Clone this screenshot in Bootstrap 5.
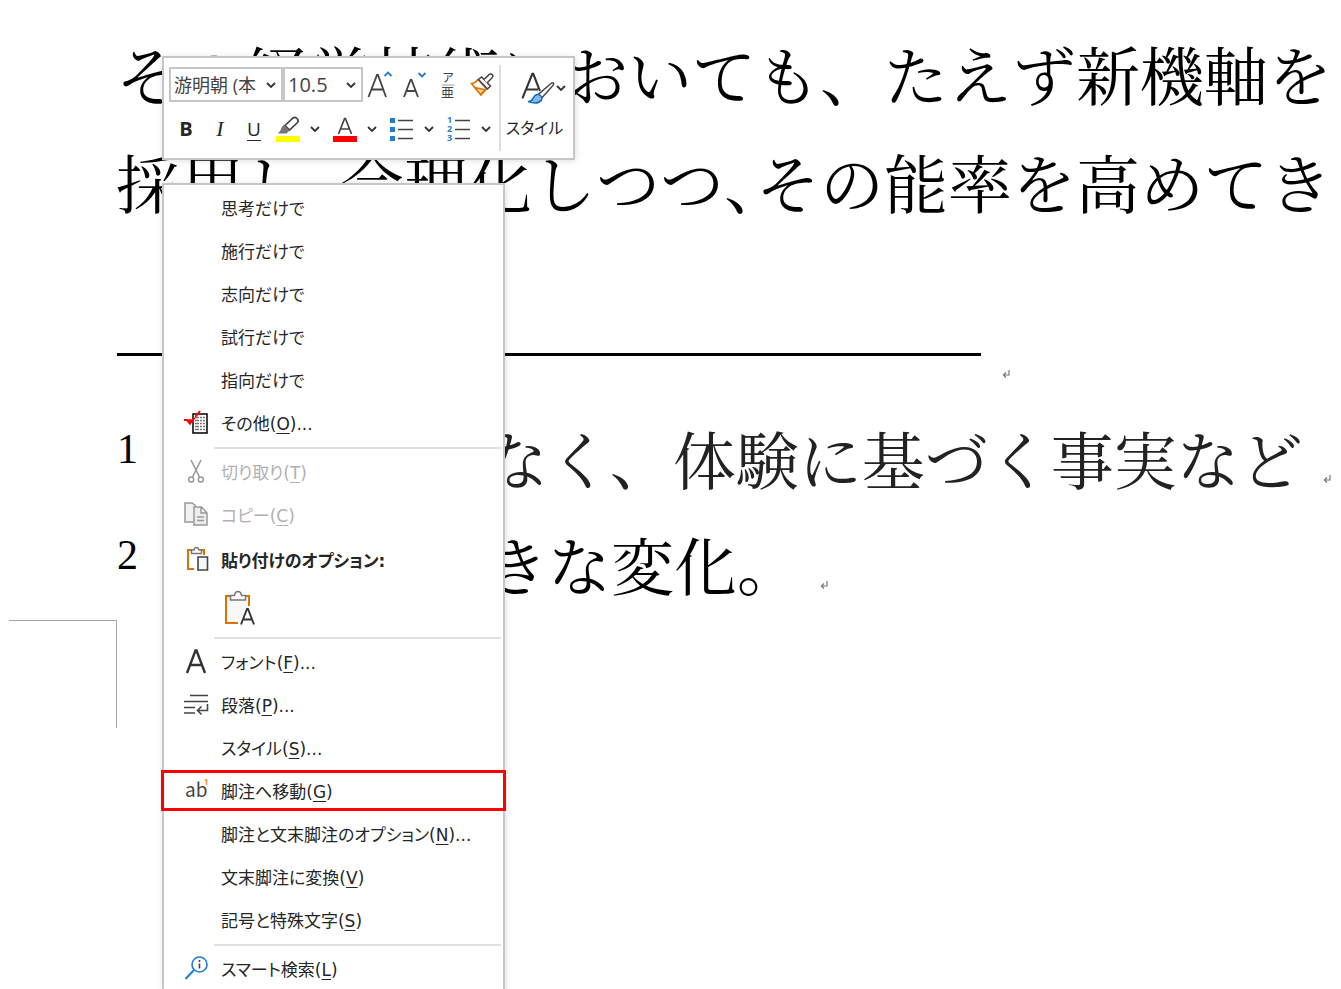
<!DOCTYPE html>
<html lang="ja">
<head>
<meta charset="utf-8">
<meta name="viewport" content="width=device-width, initial-scale=1">
<title>脚注へ移動</title>
<link href="https://cdn.jsdelivr.net/npm/bootstrap@5.3.0/dist/css/bootstrap.min.css" rel="stylesheet">
<style>
  body { background: #fff; color: #000; font-family: "Open Sans", "Noto Sans CJK JP", sans-serif; }
  .doc { font-family: "Liberation Serif", "Noto Serif CJK JP", "Noto Sans CJK JP", serif; font-weight: 400; padding: 25px 0 0 116px; }
  .doc-line { font-size: 64px; line-height: 108px; margin: 0; }
  .half { font-feature-settings: "halt"; }
  .note-rule { width: 864px; border-top: 3px solid #000; margin: 112px 0 0 1px; }
  .rule-end { height: 52px; padding: 14px 0 0 886px; }
  .note { height: 106px; }
  .note-no { width: 54px; font-size: 42px; line-height: 82px; padding-left: 1px; }
  .note-text { font-size: 63px; line-height: 110px; }
  .note-first { color: #222; }
  .note .ret { margin: 67px 0 0 20px; }
  .corner { width: 108px; height: 108px; margin-left: 9px; border: solid #a6a6a6; border-width: 1px 1px 0 0; }
  .float-box { background: #fff; border: 2px solid #c6c6c6; box-shadow: 1px 1px 6px rgba(0,0,0,.12); left: 162px; color: #262626; }
  .mini-bar { top: 56px; padding: 9px 0 11px 5px; }
  .tool, .row-item { border: 0; background: none; padding: 0; color: inherit; }
  .tool { width: 34px; height: 36px; display: flex; align-items: center; justify-content: center; }
  .drop { width: 23px; justify-content: start; padding-left: 5px; }
  .combo { border: 2px solid #c6c6c6; height: 35px; padding: 0 5px 0 3px; }
  .combo select { appearance: none; border: 0; background: none; padding: 0; color: #444; min-width: 0; flex: 1; line-height: 28px; outline: 0; }
  .combo-name { width: 114px; } .combo-name select { font-size: 18px; }
  .combo-size { width: 80px; } .combo-size select { font-size: 20px; }
  .tools-second { margin-top: 8px; }
  .bar-split { width: 2px; background: #dedede; margin: -2px 0 -4px; }
  .style-tool { width: 72px; border: 0; background: none; padding: 0 5px 7px 0; color: inherit; font: inherit; }
  .style-name { font-size: 16px; line-height: 24px; font-feature-settings: "palt"; }
  .glyph-b { font: 700 20px/24px "Open Sans", sans-serif; }
  .glyph-i { font: italic 22px/24px "Liberation Serif", serif; }
  .glyph-u { font: 400 19px/24px "Open Sans", sans-serif; text-decoration: underline; text-underline-offset: 4px; }
  .ctx { top: 183px; width: 343px; padding-top: 2px; font-family: "DejaVu Sans", "Noto Sans CJK JP", sans-serif; font-size: 17px; font-feature-settings: "palt"; }
  .row-item { width: 100%; height: 43px; display: flex; align-items: center; text-align: left; white-space: nowrap; font: inherit; font-feature-settings: inherit; line-height: 24px; }
  .row-item:disabled { color: #b1b1b1; }
  .ico { width: 57px; flex: none; display: flex; justify-content: center; padding: 0 0 4px 7px; }
  .cut { height: 2px; background: #e0e0e0; margin: 2px 2px 2px 50px; }
  .head-row { height: 50px; font-weight: 700; }
  .paste-row { height: 48px; padding: 0 0 6px 58px; }
  .picked { position: relative; }
  .picked::after { content: ""; position: absolute; inset: 0 -3px 2px; border: 3px solid red; }
  u { text-underline-offset: 3px; text-decoration-thickness: 1px; }
  svg { flex: none; fill: none; overflow: visible; }
  svg text { font-family: "Open Sans", sans-serif; fill: #444; stroke: none; }
  svg .cjk { font-family: "Noto Sans CJK JP", sans-serif; }
  svg .blue { fill: #1e7fd0; }
  svg .orange { fill: #ed8b2d; }
</style>
</head>
<body>
<svg width="0" height="0" class="position-absolute" aria-hidden="true">
  <symbol id="chev" viewBox="0 0 10 6"><path d="M1 1l4 4 4-4" stroke="#333" stroke-width="1.8"/></symbol>
  <symbol id="ret" viewBox="0 0 8 8"><path d="M7 0v5H2M4 2.500L1.500 5 4 7.500" stroke="#777" stroke-width="1.200"/></symbol>
</svg>
<div class="position-relative vh-100 overflow-hidden">
  <main class="text-nowrap">
    <div class="doc">
      <p class="doc-line">その経営技術においても、たえず新機軸を</p>
      <p class="doc-line">採用し<span class="half">、</span>合理化しつつ<span class="half">、</span>その能率を高めてき</p>
      <div class="note-rule"></div>
      <div class="rule-end d-flex"><svg class="ret" width="8" height="8"><use href="#ret"/></svg></div>
      <div class="note note-first d-flex"><span class="note-no text-black">1</span><span class="note-text">思考だけでなく、体験に基づく事実など</span><svg class="ret" width="8" height="8"><use href="#ret"/></svg></div>
      <div class="note d-flex"><span class="note-no">2</span><span class="note-text">産業界の大きな変化。</span><svg class="ret" width="8" height="8"><use href="#ret"/></svg></div>
    </div>
    <div class="corner"></div>
  </main>

  <div class="float-box mini-bar position-absolute d-flex" role="toolbar" aria-label="ミニ ツール バー">
    <div>
      <div class="d-flex">
        <div class="combo combo-name d-flex align-items-center"><select aria-label="フォント"><option>游明朝 (本</option></select><svg width="10" height="6"><use href="#chev"/></svg></div>
        <div class="combo combo-size d-flex align-items-center"><select aria-label="フォント サイズ"><option>10.5</option></select><svg width="10" height="6"><use href="#chev"/></svg></div>
        <button class="tool" aria-label="フォント サイズの拡大"><svg width="26" height="28" viewBox="0 0 26 28"><path d="M1.500 26L10 4h1L19 26M4.500 18.500h12" stroke="#444" stroke-width="1.800"/><path d="M17.500 5l3.500-3.500L24.500 5" stroke="#1e7fd0" stroke-width="1.800"/></svg></button>
        <button class="tool" aria-label="フォント サイズの縮小"><svg width="26" height="28" viewBox="0 0 26 28"><path d="M3 26L9.500 9h1L17 26M5.500 20h9" stroke="#444" stroke-width="1.800"/><path d="M17.500 2l3.500 3.500L24.500 2" stroke="#1e7fd0" stroke-width="1.800"/></svg></button>
        <button class="tool" aria-label="ルビ"><svg width="16" height="28" viewBox="0 0 16 28"><text class="cjk" x="2" y="11" font-size="12">ア</text><path d="M2 14h12" stroke="#999"/><text class="cjk" x="1" y="26" font-size="13">亜</text></svg></button>
        <button class="tool" aria-label="書式のコピー/貼り付け"><svg width="24" height="24" viewBox="0 0 24 24"><path d="M1.500 10.500q4-.5 6.500-4l8.500 9.500-5.500 6z" fill="#fff" stroke="#e07000" stroke-width="1.500"/><path d="M4.500 14.500l10 2-3.500 5z" fill="#fad7a0" stroke="#e07000" stroke-width="1.300"/><path d="M8.500 6.500L11.500 4l9 9-3 3z" fill="#fff" stroke="#444" stroke-width="1.500"/><path d="M14 6.500L19.500 1.200q2-.8 3 .8t-.2 2.500L17 10" fill="#fff" stroke="#444" stroke-width="1.500"/></svg></button>
      </div>
      <div class="tools-second d-flex">
        <button class="tool glyph-b" aria-label="太字">B</button>
        <button class="tool glyph-i" aria-label="斜体">I</button>
        <button class="tool glyph-u" aria-label="下線">U</button>
        <button class="tool" aria-label="蛍光ペンの色"><svg width="24" height="26" viewBox="0 0 24 26"><path d="M9 9.500L17 2q2-1.500 4 .5t.5 4L13.500 14z" stroke="#444" stroke-width="1.700"/><path d="M8 8.500L5.500 11.500l-.5 2L2 17.500h8.500l3-3z" fill="#777"/><path d="M0 20h24v6H0z" fill="#ff0"/></svg></button>
        <button class="tool drop" aria-label="蛍光ペンの色の一覧"><svg width="10" height="6"><use href="#chev"/></svg></button>
        <button class="tool" aria-label="フォントの色"><svg width="24" height="26" viewBox="0 0 24 26"><path d="M5.500 18L11.600 2.500h.8L18.500 18M8 13h8" stroke="#444" stroke-width="1.700"/><path d="M0 20h24v6H0z" fill="red"/></svg></button>
        <button class="tool drop" aria-label="フォントの色の一覧"><svg width="10" height="6"><use href="#chev"/></svg></button>
        <button class="tool" aria-label="箇条書き"><svg width="24" height="24" viewBox="0 0 24 24"><path d="M0 1h5v5H0zM0 10h5v5H0zM0 19h5v5H0z" fill="#1e7fd0"/><path d="M8 3.500h15M8 12.500h15M8 21.500h15" stroke="#444" stroke-width="1.500"/></svg></button>
        <button class="tool drop" aria-label="行頭文字の一覧"><svg width="10" height="6"><use href="#chev"/></svg></button>
        <button class="tool" aria-label="段落番号"><svg width="24" height="24" viewBox="0 0 24 24"><g font-size="9" font-weight="700"><text class="blue" x="0" y="6">1</text><text class="blue" x="0" y="15">2</text><text class="blue" x="0" y="24">3</text></g><path d="M8 3.500h15M8 12.500h15M8 21.500h15" stroke="#444" stroke-width="1.500"/></svg></button>
        <button class="tool drop" aria-label="番号の一覧"><svg width="10" height="6"><use href="#chev"/></svg></button>
      </div>
    </div>
    <div class="bar-split"></div>
    <button class="style-tool d-flex flex-column align-items-center justify-content-between">
      <span class="d-flex align-items-center ps-3 pt-1"><svg width="36" height="34" viewBox="0 0 36 36"><path d="M1.500 29L12 3h1l7 18M6 19.500h12" stroke="#333" stroke-width="2.200"/><path d="M18 25l14-12q2-1 2.500 0t-.5 2L22 28.500z" fill="#fff" stroke="#444" stroke-width="1.500"/><path d="M7.500 32.500q4-.5 5.500-4 2-4.500 6-3.500 4.500 2 2.500 6-3.500 5-14 1.500z" fill="#7fbcf5" stroke="#1668b8" stroke-width="1.500"/></svg><svg width="10" height="6"><use href="#chev"/></svg></span>
      <span class="style-name">スタイル</span>
    </button>
  </div>

  <div class="float-box ctx position-absolute" role="menu">
    <button class="row-item" role="menuitem"><span class="ico"></span>思考だけで</button>
    <button class="row-item" role="menuitem"><span class="ico"></span>施行だけで</button>
    <button class="row-item" role="menuitem"><span class="ico"></span>志向だけで</button>
    <button class="row-item" role="menuitem"><span class="ico"></span>試行だけで</button>
    <button class="row-item" role="menuitem"><span class="ico"></span>指向だけで</button>
    <button class="row-item" role="menuitem"><span class="ico"><svg width="24" height="24" viewBox="0 0 24 24"><path d="M9 4h14v19H9z" fill="#fff" stroke="#000" stroke-width="1.500"/><path d="M11 7.500h10M11 10.500h10M11 13.500h10M11 16.500h10M11 19.500h10" stroke="#777" stroke-width="1.500" stroke-dasharray="4 1 2 1"/><path d="M0 10h3l3 3.500L16 1" stroke="red" stroke-width="2" stroke-dasharray="12 0 3 1"/><path d="M2 10l4-1 3 1-3 5z" fill="red"/></svg></span><span>その他(<u>O</u>)...</span></button>
    <div class="cut"></div>
    <button class="row-item" role="menuitem" disabled><span class="ico"><svg width="24" height="24" viewBox="0 0 24 24"><path d="M7 1l8.500 17M17 1L8.500 18" stroke="#999" stroke-width="1.600"/><circle cx="7.200" cy="20.500" r="2.500" stroke="#999" stroke-width="1.500"/><circle cx="16.800" cy="20.500" r="2.500" stroke="#999" stroke-width="1.500"/></svg></span><span>切り取り(<u>T</u>)</span></button>
    <button class="row-item" role="menuitem" disabled><span class="ico"><svg width="24" height="24" viewBox="0 0 24 24"><path d="M9 20H1V1h7l4 3" fill="#f2f2f2" stroke="#999" stroke-width="1.500"/><path d="M10 5h7.500l5.500 6v12H10zM17 5v6h6M13 15h7M13 18.500h7" fill="#eee" stroke="#999" stroke-width="1.500"/></svg></span><span>コピー(<u>C</u>)</span></button>
    <div class="head-row d-flex align-items-center"><span class="ico"><svg width="24" height="26" viewBox="0 0 24 26"><path d="M10 22H4V3h4M16 3h4v5" stroke="#e07000" stroke-width="2"/><path d="M7.500 6.500V3H10q.5-2.500 2.500-2.500T15 3h2.500v3.500z" fill="#fff" stroke="#777" stroke-width="1.400"/><path d="M14 10h9.500v13H14z" fill="#f7f7f7" stroke="#444" stroke-width="1.600"/></svg></span><span>貼り付けのオプション:</span></div>
    <div class="paste-row d-flex align-items-center"><button class="tool" aria-label="テキストのみ保持"><svg width="30" height="36" viewBox="0 0 30 36"><path d="M14 33H2V6h5M20 6h5v10" stroke="#e07000" stroke-width="2"/><path d="M3 7h21v12l-8 13H3z" fill="#f8f8f8"/><path d="M6.500 10V5.500h4Q11 1.500 14 1.500t3.500 4h4V10z" fill="#fff" stroke="#777" stroke-width="1.500"/><path d="M17 34.500L23 19h1l6 15.500M19 29.500h9" stroke="#333" stroke-width="1.900"/></svg></button></div>
    <div class="cut"></div>
    <button class="row-item" role="menuitem"><span class="ico"><svg width="24" height="26" viewBox="0 0 24 26"><path d="M3 25L11.500 2.500h1L21 25M6 17h12" stroke="#333" stroke-width="2.400"/></svg></span><span>フォント(<u>F</u>)...</span></button>
    <button class="row-item" role="menuitem"><span class="ico"><svg width="24" height="22" viewBox="0 0 24 22"><path d="M6 2.500h18M0 8.500h24M0 14.500h11M0 20h11M23.500 11v6.500H14M17.500 13.500l-4 4 4 4" stroke="#444" stroke-width="1.600"/></svg></span><span>段落(<u>P</u>)...</span></button>
    <button class="row-item" role="menuitem"><span class="ico"></span><span>スタイル(<u>S</u>)...</span></button>
    <button class="row-item picked" role="menuitem"><span class="ico"><svg width="24" height="24" viewBox="0 0 24 24"><text class="cjk" x="1" y="19" font-size="19">ab</text><text class="orange" x="20" y="7" font-size="8" font-weight="700">1</text></svg></span><span>脚注へ移動(<u>G</u>)</span></button>
    <button class="row-item" role="menuitem"><span class="ico"></span><span>脚注と文末脚注のオプション(<u>N</u>)...</span></button>
    <button class="row-item" role="menuitem"><span class="ico"></span><span>文末脚注に変換(<u>V</u>)</span></button>
    <button class="row-item" role="menuitem"><span class="ico"></span><span>記号と特殊文字(<u>S</u>)</span></button>
    <div class="cut"></div>
    <button class="row-item" role="menuitem"><span class="ico"><svg width="24" height="26" viewBox="0 0 24 26"><circle cx="15.500" cy="9.500" r="7.500" stroke="#1e7fd0" stroke-width="1.600"/><path d="M10 15L1.500 24" stroke="#1e7fd0" stroke-width="2"/><path d="M15.500 8.500v5M15.500 5v2" stroke="#444" stroke-width="1.600"/></svg></span><span>スマート検索(<u>L</u>)</span></button>
  </div>
</div>
<script src="https://cdn.jsdelivr.net/npm/bootstrap@5.3.0/dist/js/bootstrap.bundle.min.js"></script>
</body>
</html>
